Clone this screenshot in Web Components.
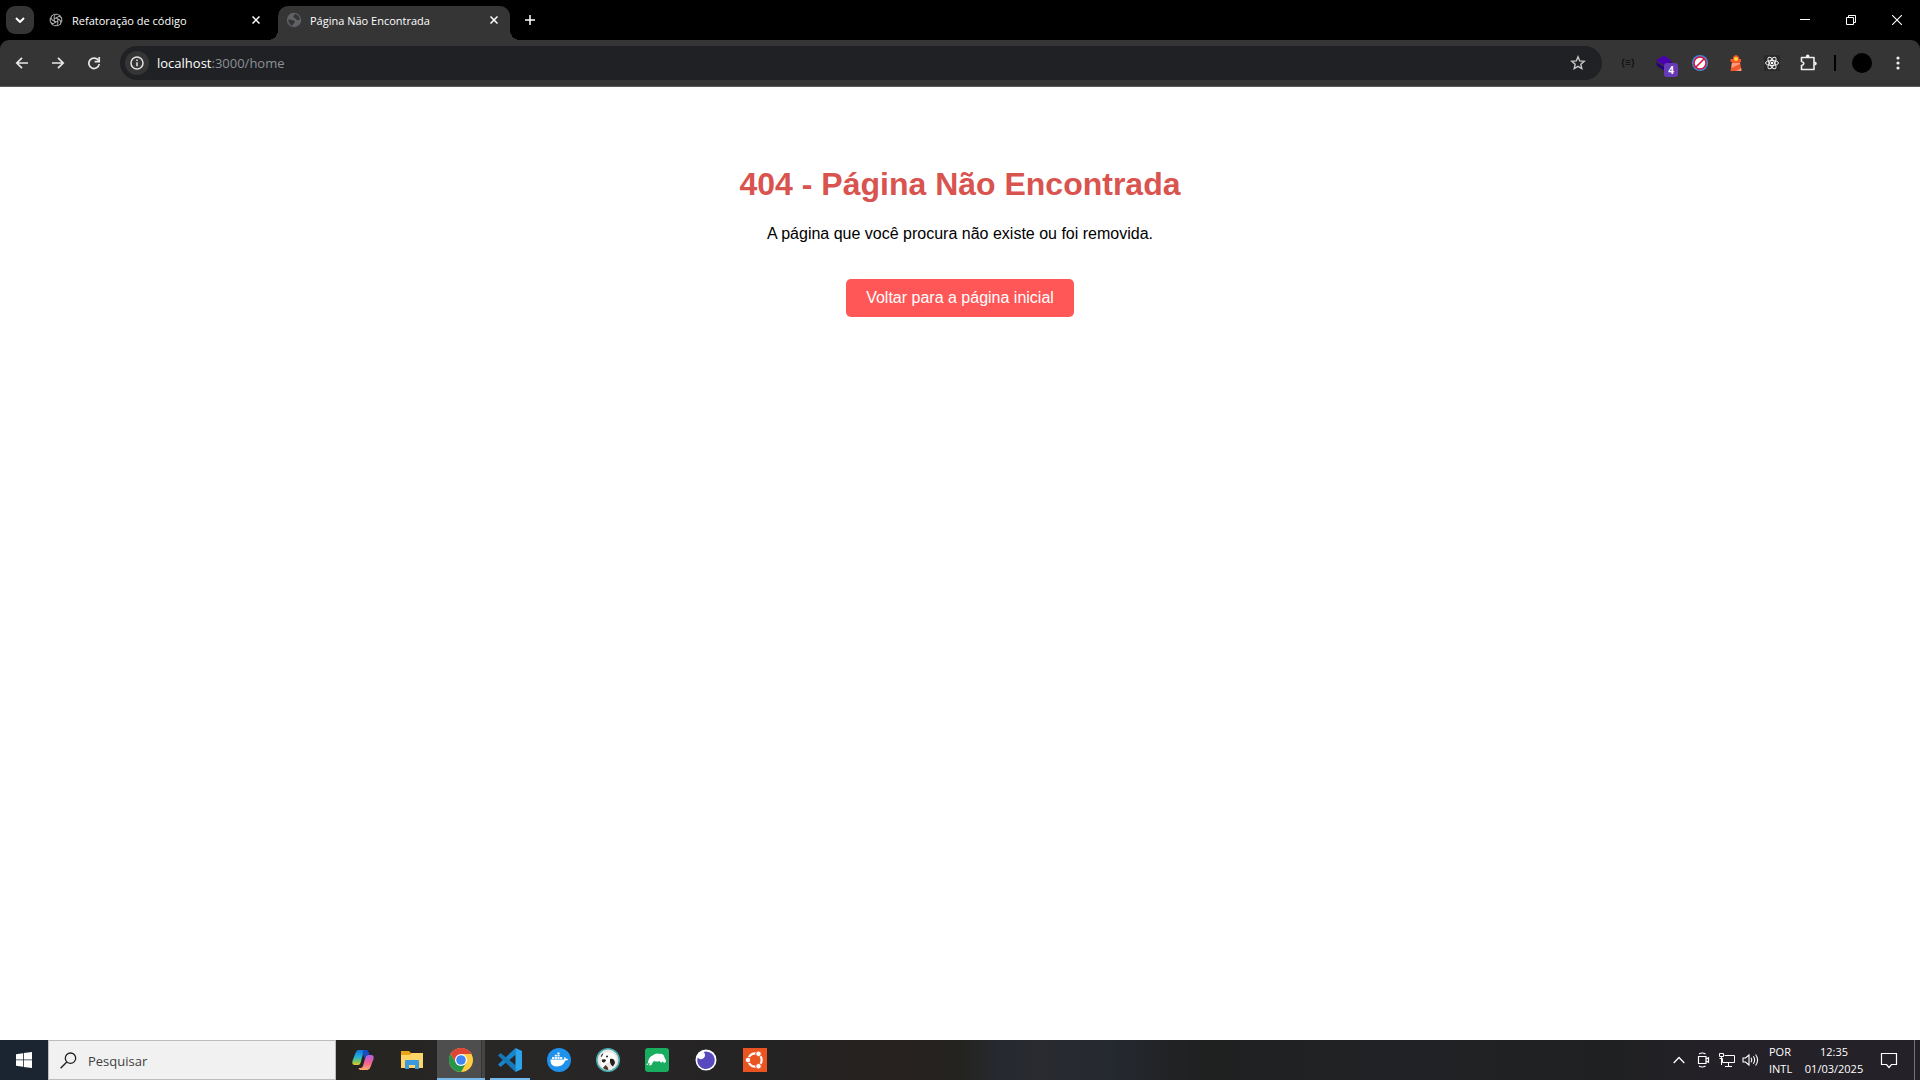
<!DOCTYPE html>
<html lang="pt-BR">
<head>
<meta charset="utf-8">
<title>Página Não Encontrada</title>
<style>
  html, body { height: 100%; }
  body { margin: 0; background: #fff; }
</style>
</head>
<body>
<desktop-screen></desktop-screen>
<script>
const reset = `
  *, *::before, *::after { box-sizing: border-box; }
  button { font: inherit; color: inherit; background: none; border: 0; padding: 0; margin: 0; display: flex; align-items: center; justify-content: center; }
  svg { display: block; flex: none; }
`;
function define(name, css, html) {
  const template = document.createElement('template');
  template.innerHTML = `<style>${reset}${css}</style>${html}`;
  customElements.define(name, class extends HTMLElement {
    constructor() {
      super();
      this.attachShadow({ mode: 'open' }).append(template.content.cloneNode(true));
    }
  });
}

/* One tab of the strip: icon slot, title, close button */
define('browser-tab', `
  :host { display: flex; align-items: center; height: 34px; width: 232px; padding: 0 8px; color: #fff; position: relative; }
  :host([active]) { background: #353535; border-radius: 10px 10px 0 0; }
  :host([active])::before, :host([active])::after { content: ""; position: absolute; bottom: 0; width: 10px; height: 10px; }
  :host([active])::before { left: -10px; background: radial-gradient(circle at 0 0, transparent 10px, #353535 10px); }
  :host([active])::after { right: -10px; background: radial-gradient(circle at 100% 0, transparent 10px, #353535 10px); }
  .title { flex: 1; margin-left: 8px; font-size: 11px; line-height: 16px; padding-bottom: 4px; white-space: nowrap; overflow: hidden; }
  slot[name=icon]::slotted(svg) { display: block; margin-bottom: 6px; }
  button { width: 16px; height: 16px; margin-bottom: 6px; }
`, `
  <slot name="icon"></slot>
  <span class="title"><slot></slot></span>
  <button aria-label="Fechar"><svg width="8" height="8" viewBox="0 0 8 8"><path d="M.5.5l7 7M7.5.5l-7 7" stroke="#fff" stroke-width="1.5"/></svg></button>
`);

define('tab-strip', `
  :host { display: flex; align-items: flex-end; height: 40px; background: #000; }
  .search { width: 28px; height: 28px; margin: 0 6px; border-radius: 9px; background: #353535; align-self: flex-start; margin-top: 6px; }
  .tabs { display: flex; gap: 6px; }
  .new { width: 28px; height: 28px; margin: 0 6px 6px; }
  .window { display: flex; margin-left: auto; align-self: stretch; }
  .window button { width: 46px; }
`, `
  <button class="search" aria-label="Pesquisar guias"><svg width="10" height="6" viewBox="0 0 10 6"><path d="M1 1l4 4 4-4" fill="none" stroke="#fff" stroke-width="2"/></svg></button>
  <div class="tabs">
    <browser-tab>
      <svg slot="icon" width="16" height="14" viewBox="-8 -7 16 14"><g fill="none" stroke="#b9b9b9" stroke-width="1">
        <path d="M-1.8 1V-3.2A2.700 2.700 0 0 1 2.600-5.200L5-3.600M-1.8 1L0 2"/>
        <path d="M-1.8 1V-3.2A2.700 2.700 0 0 1 2.600-5.200L5-3.600" transform="rotate(60)"/>
        <path d="M-1.8 1V-3.2A2.700 2.700 0 0 1 2.600-5.200L5-3.600" transform="rotate(120)"/>
        <path d="M-1.8 1V-3.2A2.700 2.700 0 0 1 2.600-5.200L5-3.600" transform="rotate(180)"/>
        <path d="M-1.8 1V-3.2A2.700 2.700 0 0 1 2.600-5.200L5-3.600" transform="rotate(240)"/>
        <path d="M-1.8 1V-3.2A2.700 2.700 0 0 1 2.600-5.200L5-3.600" transform="rotate(300)"/></g></svg>
      Refatoração de código
    </browser-tab>
    <browser-tab active>
      <svg slot="icon" width="16" height="16" viewBox="0 0 16 16"><circle cx="8" cy="8" r="7.200" fill="#5f6368"/><path d="M9.500 2Q7 3 7.500 5.500 10 6 11 8q1.500.5 2.800-.5Q14 4 9.500 2zM2.200 7.500Q5 7 7.500 8.500q2 .5 1 2.500-2 .5-2 2.800Q2.500 12.500 2.200 7.500z" fill="#353535"/></svg>
      Página Não Encontrada
    </browser-tab>
  </div>
  <button class="new" aria-label="Nova guia"><svg width="10" height="10" viewBox="0 0 10 10"><path d="M5 0v10M0 5h10" stroke="#fff" stroke-width="1.500"/></svg></button>
  <div class="window">
    <button aria-label="Minimizar"><svg width="10" height="10" viewBox="0 0 10 10"><path d="M0 4.500h10" stroke="#fff"/></svg></button>
    <button aria-label="Restaurar"><svg width="10" height="10" viewBox="0 0 10 10"><path d="M.5 2.500h7v7h-7zM2.500 2.500v-2h7v7h-2" fill="none" stroke="#fff"/></svg></button>
    <button aria-label="Fechar janela"><svg width="10" height="10" viewBox="0 0 10 10"><path d="M0 0l10 10M10 0L0 10" stroke="#fff" stroke-width="1.100"/></svg></button>
  </div>
`);

define('address-bar', `
  :host { display: flex; align-items: center; flex: 1; height: 34px; border-radius: 17px; background: #202124; padding: 0 10px 0 5px; }
  .info { width: 24px; height: 24px; border-radius: 12px; background: #353535; }
  .url { flex: 1; margin-left: 8px; font-size: 13px; line-height: 20px; color: #8c9095; }
  b { font-weight: 400; color: #fff; }
  .star { width: 28px; height: 28px; }
`, `
  <button class="info" aria-label="Informações do site"><svg width="14" height="14" viewBox="0 0 14 14"><circle cx="7" cy="7" r="6" fill="none" stroke="#e3e3e3" stroke-width="1.500"/><path d="M7 6.200v4M7 3.600v1.500" stroke="#e3e3e3" stroke-width="1.500"/></svg></button>
  <span class="url"><b>localhost</b>:3000/home</span>
  <button class="star" aria-label="Favoritar"><svg width="16" height="16" viewBox="0 0 16 16"><path d="M8 1.800l1.700 4.100 4.500.4-3.400 2.900 1 4.400L8 11.300l-3.800 2.300 1-4.400L1.800 6.300l4.500-.4z" fill="none" stroke="#c7c7c7" stroke-width="1.400"/></svg></button>
`);

define('browser-toolbar', `
  :host { display: block; background: #000; }
  .bar { display: flex; align-items: center; height: 47px; padding: 0 4px; background: #353535; border-radius: 9px 9px 0 0; border-bottom: 1px solid #5c5c5c; }
  .bar > button { width: 36px; height: 34px; flex: none; position: relative; }
  address-bar { margin: 0 8px; }
  .badge { position: absolute; left: 18px; top: 17px; width: 14px; height: 14px; border-radius: 3px; background: #673ab7; color: #fff; font-size: 10px; line-height: 14px; font-weight: 700; text-align: center; }
  .sep { width: 2px; height: 16px; background: #000; margin: 0 8px; }
  .avatar { width: 20px; height: 20px; border-radius: 10px; background: #000; }
`, `
  <div class="bar">
    <button aria-label="Voltar"><svg width="14" height="12" viewBox="0 0 14 12"><path d="M13 6H2M7 .8L1.800 6 7 11.200" fill="none" stroke="#e8e8e8" stroke-width="1.700"/></svg></button>
    <button aria-label="Avançar"><svg width="14" height="12" viewBox="0 0 14 12"><path d="M1 6h11M7 .8L12.200 6 7 11.200" fill="none" stroke="#e8e8e8" stroke-width="1.700"/></svg></button>
    <button aria-label="Recarregar"><svg width="14" height="14" viewBox="0 0 14 14"><path d="M11.500 4.600A5.200 5.200 0 1 0 12.200 8" fill="none" stroke="#e8e8e8" stroke-width="1.700"/><path d="M12.200 1v4.600H7.600" fill="none" stroke="#e8e8e8" stroke-width="1.700"/></svg></button>
    <address-bar></address-bar>
    <button aria-label="JSON"><svg width="14" height="10" viewBox="0 0 14 10"><path d="M3.500 1H3Q2 1 2 2v1.500Q2 5 .7 5 2 5 2 6.500V8q0 1 1 1h.5M10.500 1h.5q1 0 1 1v1.500Q12 5 13.300 5 12 5 12 6.500V8q0 1-1 1h-.5" fill="none" stroke="#111" stroke-width="1.200"/><path d="M4.500 2.500h5M4.500 4.500h5M4.500 6.500h5" stroke="#161616"/></svg></button>
    <button aria-label="Camadas"><svg width="18" height="16" viewBox="0 0 18 16"><path d="M1 7l7 4.500 8-5v4L9 15.500 2 11z" fill="#26007a"/><path d="M9 .4L17 6 9.500 10.500 1 5.500z" fill="#4a00b0"/></svg><span class="badge">4</span></button>
    <button aria-label="Bloqueador"><svg width="16" height="16" viewBox="0 0 16 16"><circle cx="8" cy="8" r="8" fill="#458de0"/><circle cx="8" cy="8" r="6" fill="#fff" stroke="#d5143c" stroke-width="1.600"/><path d="M4 12L12 4" stroke="#d5143c" stroke-width="1.600"/></svg></button>
    <button aria-label="Lighthouse"><svg width="14" height="16" viewBox="0 0 14 16"><path d="M3.800 4Q4 .4 7 0q3 .4 3.200 4H12v3h-1l1.500 9h-11L3 7H1.500V4z" fill="#f4592b"/><path d="M3 8h8v1L2.300 13zM7 16l5.200-3 .3 3z" fill="#ff9a80"/><circle cx="7" cy="4" r="2" fill="#ffd92e"/></svg></button>
    <button aria-label="React"><svg width="16" height="16" viewBox="-8 -8 16 16"><path d="M-8-8H8V8H-8z" fill="#292929"/><g fill="none" stroke="#f1f1f1" stroke-width="1"><ellipse rx="6.500" ry="2.500"/><ellipse rx="6.500" ry="2.500" transform="rotate(60)"/><ellipse rx="6.500" ry="2.500" transform="rotate(120)"/></g><circle r="1.300" fill="#fff"/></svg></button>
    <button aria-label="Extensões"><svg width="18" height="18" viewBox="0 0 18 18"><path d="M2.500 3.500H15v12H2.500v-4q2.300-.5 2.300-2t-2.300-2z" fill="none" stroke="#eee" stroke-width="1.600" stroke-linejoin="round"/><path d="M6.800 3a1.900 2.400 0 0 1 3.800 0zM15.500 7.500a2.300 2 0 0 1 0 4z" fill="#eee"/></svg></button>
    <span class="sep"></span>
    <button aria-label="Perfil"><span class="avatar"></span></button>
    <button aria-label="Menu"><svg width="4" height="14" viewBox="0 0 4 14"><g fill="#eee"><circle cx="2" cy="2" r="1.600"/><circle cx="2" cy="7" r="1.600"/><circle cx="2" cy="12" r="1.600"/></g></svg></button>
  </div>
`);

define('not-found-page', `
  :host { display: block; flex: 1; padding-top: 58px; background: #fff; color: #000; text-align: center; font: 16px "Liberation Sans", Arial, sans-serif; }
  h1 { margin: 21px 0 22px; font-size: 32px; line-height: 37px; color: #d9534f; }
  p { margin: 0 0 16px; line-height: 18px; }
  a { display: inline-block; margin-top: 20px; padding: 10px 20px; line-height: 18px; border-radius: 5px; background: #ff5757; color: #fff; text-decoration: none; }
`, `
  <h1>404 - Página Não Encontrada</h1>
  <p>A página que você procura não existe ou foi removida.</p>
  <a href="#">Voltar para a página inicial</a>
`);

define('task-button', `
  :host { display: block; height: 40px; }
  button { width: 48px; height: 40px; position: relative; }
  :host([active]) button { background: linear-gradient(90deg, #4e4e4e 44px, #343434 44px 45px, #454545 45px); }
  :host([active]) button::after, :host([open]) button::after { content: ""; position: absolute; bottom: 0; left: 0; right: 0; height: 2px; background: #76b9ed; }
  :host([open]) button::after { left: 4px; right: 4px; }
`, `<button><slot></slot></button>`);

define('task-bar', `
  :host { display: flex; height: 40px; color: #fff; background: linear-gradient(90deg, #25241f 300px, #292626 500px, #242323 780px, #27221f 900px, #24231f 960px, #272930 1000px, #292b31 1040px, #252930 1110px, #1f2020 1200px, #202225 1400px, #1e2021 1600px, #242128 1720px); }
  .start { width: 48px; background: #1b2531; }
  label { display: flex; align-items: center; width: 288px; padding-left: 11px; border: 1px solid #bcbcbc; background: #f1f1f1; }
  input { flex: 1; min-width: 0; margin-left: 11px; padding: 2px 0 0; border: 0; background: none; outline: 0; font: inherit; font-size: 13px; line-height: 20px; }
  input::placeholder { color: #404040; opacity: 1; }
  .apps { display: flex; gap: 1px; margin-left: 3px; }
  .tray { display: flex; margin-left: auto; font-size: 11px; line-height: 17px; text-align: center; }
  .tray button { width: 24px; }
  .tray .lang, .tray .clock { flex-direction: column; }
  .tray .lang { width: 36px; align-items: flex-start; padding-left: 6px; }
  .tray .clock { width: 70px; }
  .tray .note { width: 40px; }
  .tray .show { width: 6px; margin-left: 5px; border-left: 1px solid #737278; }
`, `
  <button class="start" aria-label="Iniciar"><svg width="16" height="16" viewBox="0 0 16 16"><path d="M0 2.200L7 1.200V7.500H0zM7.800 1.100L16 0v7.500H7.800zM0 8.300h7v6.500l-7-1zM7.800 8.300H16V16l-8.200-1.100z" fill="#fff"/></svg></button>
  <label><svg width="17" height="17" viewBox="0 0 17 17"><circle cx="10.500" cy="6.200" r="5.200" fill="none" stroke="#222" stroke-width="1.300"/><path d="M6.800 9.900L.6 16.200" stroke="#222" stroke-width="1.400"/></svg><input type="search" aria-label="Pesquisar" placeholder="Pesquisar"></label>
  <div class="apps">
    <task-button><svg width="24" height="24" viewBox="0 0 24 24"><defs>
      <linearGradient id="c1" x1="0" y1="0" x2="0" y2="1"><stop offset="0" stop-color="#1676dc"/><stop offset=".45" stop-color="#21b1dc"/><stop offset=".75" stop-color="#72c763"/><stop offset="1" stop-color="#e9cb24"/></linearGradient>
      <linearGradient id="c2" x1="0" y1="0" x2="0" y2="1"><stop offset="0" stop-color="#ae62e8"/><stop offset=".5" stop-color="#ef6094"/><stop offset="1" stop-color="#ffac6a"/></linearGradient></defs>
      <path d="M14.500 2H7.500Q5.500 2 4.500 5L1.500 13Q.5 17 4 17H7q2 0 2.600-2.300L12 6Q12.700 4 14.500 4h2Q16 2 14.500 2z" fill="url(#c1)"/>
      <path d="M9.500 22h7q2 0 3-3l3-8q1-4-2.500-4h-3q-2 0-2.600 2.300L12 18q-.7 2-2.500 2h-2q.5 2 2 2z" fill="url(#c2)"/><path d="M12.500 2h3q1.800 0 2.500 3l.4 2H17q-1.700 0-2.300 2L14 11l-2.500-6z" fill="#164ec0"/></svg></task-button>
    <task-button><svg width="22" height="20" viewBox="0 0 22 20"><path d="M0 1h8l2 2h12v15H0z" fill="#e8a317"/><path d="M0 5h9l2-2h11v15H0z" fill="#ffd567"/><path d="M4 19v-8q0-1 1-1h12q1 0 1 1v8h-4v-4H8v4z" fill="#3b99dd"/></svg></task-button>
    <task-button active><svg width="24" height="24" viewBox="0 0 24 24"><circle cx="12" cy="12" r="12" fill="#ffcd40"/><path d="M1.600 6A12 12 0 0 1 22.400 6H12L7 15z" fill="#df4434"/><path d="M1.600 6A12 12 0 0 0 12 24l5.200-9L12 17.500 7 15z" fill="#26974a"/><circle cx="12" cy="12" r="6" fill="#fff"/><circle cx="12" cy="12" r="4.800" fill="#4285f4"/></svg></task-button>
    <task-button open><svg width="24" height="24" viewBox="0 0 24 24"><path d="M0 16.500L17.500 0 18 6.500 2.500 19z" fill="#1687cf"/><path d="M0 7.500L17.500 24l.5-6.500L2.500 5z" fill="#1778b9"/><path d="M17.500 0L24 3v18l-6.500 3z" fill="#2ba3ed"/></svg></task-button>
    <task-button><svg width="24" height="24" viewBox="0 0 24 24"><circle cx="12" cy="12" r="12" fill="#1d91ec"/><path d="M3.500 11.500h13.600q.5-1 .1-2.700 1.500.6 1.800 2 1.300-.3 2.300.3-1 1.700-3 1.500-2 5.900-8.300 6-5.700 0-6.500-5.100z" fill="#fff"/><path d="M5 9h2.200v2H5zM7.700 9h2.200v2H7.700zM10.400 9h2.200v2h-2.200zM13.100 9h2.200v2h-2.200zM7.700 6.700h2.200v1.800H7.700zM10.400 6.700h2.200v1.800h-2.200zM10.400 4.500h2.200v1.700h-2.200z" fill="#f4f9ff"/></svg></task-button>
    <task-button><svg width="24" height="24" viewBox="0 0 24 24"><circle cx="12" cy="12" r="11.200" fill="#eee9e4" stroke="#45adb1" stroke-width="1.600"/><path d="M5.500 8Q7 3.500 12 4.500q7-.5 8 6.500l-1 3q-2-3.500-4.500-3.500L13 14l-3 1-1 4-3 .5Q4 16 5.500 8z" fill="#fff"/><path d="M7.500 5Q5 6 4.800 9L6 8.500zM14 11q4.500-1.500 5 4l-2 3.500q-3.500-2-3-7.500zM5.800 11.500l3.400-.3.800 1.600-2 2-2-1z" fill="#241f20"/><path d="M9.500 17q3 2 3 5-3.500.3-5.500-2z" fill="#49352f"/><circle cx="11" cy="8.500" r="1" fill="#222"/></svg></task-button>
    <task-button><svg width="24" height="24" viewBox="0 0 24 24"><rect width="24" height="24" rx="3" fill="#19ad60"/><path d="M3 15Q3 9.500 7.500 7.500q4-3 7-1.500 4-.8 5 3.500l1.500 3q.3 1.800-1.500 2.500l-2.300-1.500-.7 1.500-2-2q-2.500 1-5.500 0-1.500 1-2.500 4l-2.500.4.700-2.600-1.200.2-.5 1.800-1.800.2z" fill="#fff"/></svg></task-button>
    <task-button><svg width="22" height="22" viewBox="0 0 22 22"><circle cx="11" cy="11" r="10.500" fill="#fff"/><path d="M8.500 3A8.700 8.700 0 1 1 2.800 8.500 4 4 0 1 0 8.500 3z" fill="#5849be"/></svg></task-button>
    <task-button><svg width="24" height="24" viewBox="-12 -12 24 24"><path d="M-12-12h24v24h-24z" fill="#e95420"/><circle r="6.700" fill="none" stroke="#fff" stroke-width="2.200"/><g fill="#fff" stroke="#e95420" stroke-width="1"><circle cx="-7" r="2.800"/><circle cx="3.500" cy="-6.200" r="2.800"/><circle cx="3.500" cy="6.200" r="2.800"/></g></svg></task-button>
  </div>
  <div class="tray">
    <button aria-label="Ícones ocultos"><svg width="12" height="8" viewBox="0 0 12 8"><path d="M.7 7L6 1.500 11.300 7" fill="none" stroke="#fff" stroke-width="1.300"/></svg></button>
    <button aria-label="Reunião"><svg width="14" height="16" viewBox="0 0 14 16"><path d="M2.500 4.500H10v7H2.500zM10 7l2.500-1.300v4.600L10 9M3 2q3.300-2 6.500 0M3 14q3.300 2 6.500 0" fill="none" stroke="#fff" stroke-width="1.200"/></svg></button>
    <button aria-label="Rede"><svg width="16" height="16" viewBox="0 0 16 16"><path d="M5.500 3.500h10v7H3.500v-4M9.500 11v3M6 14.500h7M.5 1.500h4v3h-4zM2.500 4.500v8.500M.5 6.500h3" fill="none" stroke="#fff"/></svg></button>
    <button aria-label="Volume"><svg width="18" height="14" viewBox="0 0 18 14"><path d="M1 5h2.500L7 2v10L3.500 9H1zM9 4.800q1.500 2.200 0 4.400M11.300 3.200q2.700 3.800 0 7.600M13.600 1.500q4 5.500 0 11" fill="none" stroke="#fff" stroke-width="1.100"/></svg></button>
    <button class="lang"><span>POR</span><span>INTL</span></button>
    <button class="clock"><span>12:35</span><span>01/03/2025</span></button>
    <button class="note" aria-label="Notificações"><svg width="18" height="18" viewBox="0 0 18 18"><path d="M1.500 2.500h15v11h-5L9 16.500 6.500 13.500h-5z" fill="none" stroke="#fff" stroke-width="1.200"/></svg></button>
    <button class="show" aria-label="Mostrar área de trabalho"></button>
  </div>
`);

define('desktop-screen', `
  :host { display: flex; flex-direction: column; min-height: 100vh; font-family: "Segoe UI", "Open Sans", "Noto Sans", sans-serif; }
`, `
  <tab-strip></tab-strip>
  <browser-toolbar></browser-toolbar>
  <not-found-page></not-found-page>
  <task-bar></task-bar>
`);
</script>
</body>
</html>
